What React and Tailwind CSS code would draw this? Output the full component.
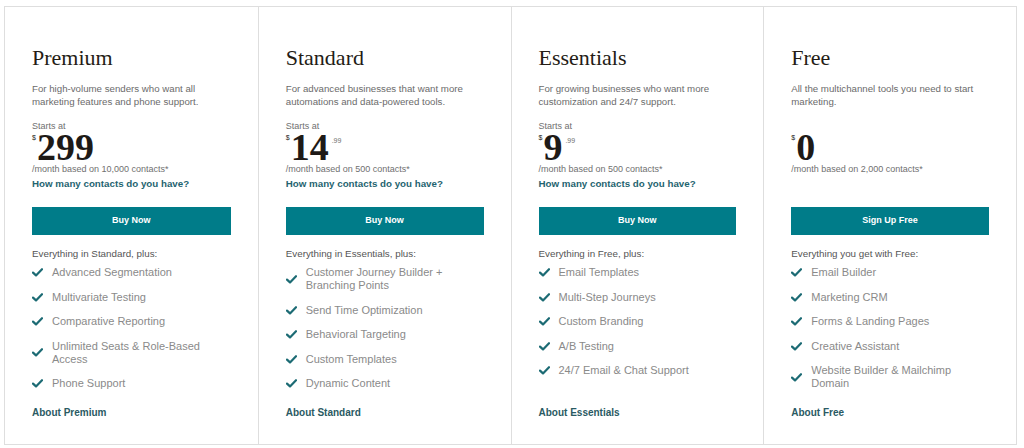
import React from "react";

const plans = [
  {
    name: "Premium",
    desc: ["For high-volume senders who want all", "marketing features and phone support."],
    starts: true,
    price: "299",
    cents: "",
    month: "/month based on 10,000 contacts*",
    link: true,
    button: "Buy Now",
    intro: "Everything in Standard, plus:",
    features: [
      ["Advanced Segmentation"],
      ["Multivariate Testing"],
      ["Comparative Reporting"],
      ["Unlimited Seats & Role-Based", "Access"],
      ["Phone Support"],
    ],
    about: "About Premium",
  },
  {
    name: "Standard",
    desc: ["For advanced businesses that want more", "automations and data-powered tools."],
    starts: true,
    price: "14",
    cents: ".99",
    month: "/month based on 500 contacts*",
    link: true,
    button: "Buy Now",
    intro: "Everything in Essentials, plus:",
    features: [
      ["Customer Journey Builder +", "Branching Points"],
      ["Send Time Optimization"],
      ["Behavioral Targeting"],
      ["Custom Templates"],
      ["Dynamic Content"],
    ],
    about: "About Standard",
  },
  {
    name: "Essentials",
    desc: ["For growing businesses who want more", "customization and 24/7 support."],
    starts: true,
    price: "9",
    cents: ".99",
    month: "/month based on 500 contacts*",
    link: true,
    button: "Buy Now",
    intro: "Everything in Free, plus:",
    features: [
      ["Email Templates"],
      ["Multi-Step Journeys"],
      ["Custom Branding"],
      ["A/B Testing"],
      ["24/7 Email & Chat Support"],
    ],
    about: "About Essentials",
  },
  {
    name: "Free",
    desc: ["All the multichannel tools you need to start", "marketing."],
    starts: false,
    price: "0",
    cents: "",
    month: "/month based on 2,000 contacts*",
    link: false,
    button: "Sign Up Free",
    intro: "Everything you get with Free:",
    features: [
      ["Email Builder"],
      ["Marketing CRM"],
      ["Forms & Landing Pages"],
      ["Creative Assistant"],
      ["Website Builder & Mailchimp", "Domain"],
    ],
    about: "About Free",
  },
];

function Check() {
  return (
    <svg width="11" height="9" viewBox="0 0 11 9" className="shrink-0">
      <path d="M1 4.6 L4 7.4 L10 1.2" fill="none" stroke="#1c6b74" strokeWidth="2.2" strokeLinecap="round" strokeLinejoin="round" />
    </svg>
  );
}

const sans = { fontFamily: '"Liberation Sans", Arial, sans-serif' };
const serif = { fontFamily: '"Liberation Serif", "Times New Roman", serif' };

function Card({ p, first }) {
  return (
    <div className={`flex flex-col pt-[38px] pb-[25px] px-[27px] ${first ? "" : "border-l border-[#dedede]"}`}>
      <div className="text-[22px] leading-[26px] text-[#241c15]" style={serif}>{p.name}</div>
      <div className="mt-[11px] text-[9.7px] leading-[13px] text-[#6b6b6b]">
        {p.desc.map((l, i) => (
          <div key={i}>{l}</div>
        ))}
      </div>
      <div className={`mt-[13px] text-[9px] leading-[10px] text-[#707070] ${p.starts ? "" : "invisible"}`}>Starts at</div>
      <div className="flex items-start h-[32px]">
        <span className="text-[7px] leading-[8px] mt-[3px] mr-[1px] text-[#241c15]">$</span>
        <span className="text-[38px] leading-[32px] font-bold text-[#1e1a17]" style={serif}>{p.price}</span>
        {p.cents && <span className="text-[7px] leading-[8px] mt-[6px] ml-[3px] text-[#707070]">{p.cents}</span>}
      </div>
      <div className="mt-[1px] text-[9px] leading-[11px] text-[#707070]">{p.month}</div>
      <div className={`mt-[2px] text-[9.75px] leading-[13px] font-bold text-[#1f6470] ${p.link ? "" : "invisible"}`}>How many contacts do you have?</div>
      <div className="mt-[17px] h-[28px] bg-[#007c89] flex items-center justify-center text-white text-[9px] font-bold">{p.button}</div>
      <div className="mt-[12.5px] text-[9.8px] leading-[12px] text-[#555555]">{p.intro}</div>
      <div className="mt-[6.5px] flex flex-col gap-[11.5px]">
        {p.features.map((f, i) => (
          <div key={i} className="flex items-center gap-[9px]">
            <Check />
            <div className="text-[11px] leading-[13px] text-[#8a8a8a]">
              {f.map((l, j) => (
                <div key={j}>{l}</div>
              ))}
            </div>
          </div>
        ))}
      </div>
      <div className="mt-auto text-[10px] leading-[12px] font-bold text-[#2a5a63]">{p.about}</div>
    </div>
  );
}

export default function App() {
  return (
    <div className="w-[1024px] h-[448px] bg-white pt-[6px] pl-[4px]" style={sans}>
      <div className="w-[1013px] h-[439px] border border-[#dedede] grid grid-cols-4">
        {plans.map((p, i) => (
          <Card key={p.name} p={p} first={i === 0} />
        ))}
      </div>
    </div>
  );
}
